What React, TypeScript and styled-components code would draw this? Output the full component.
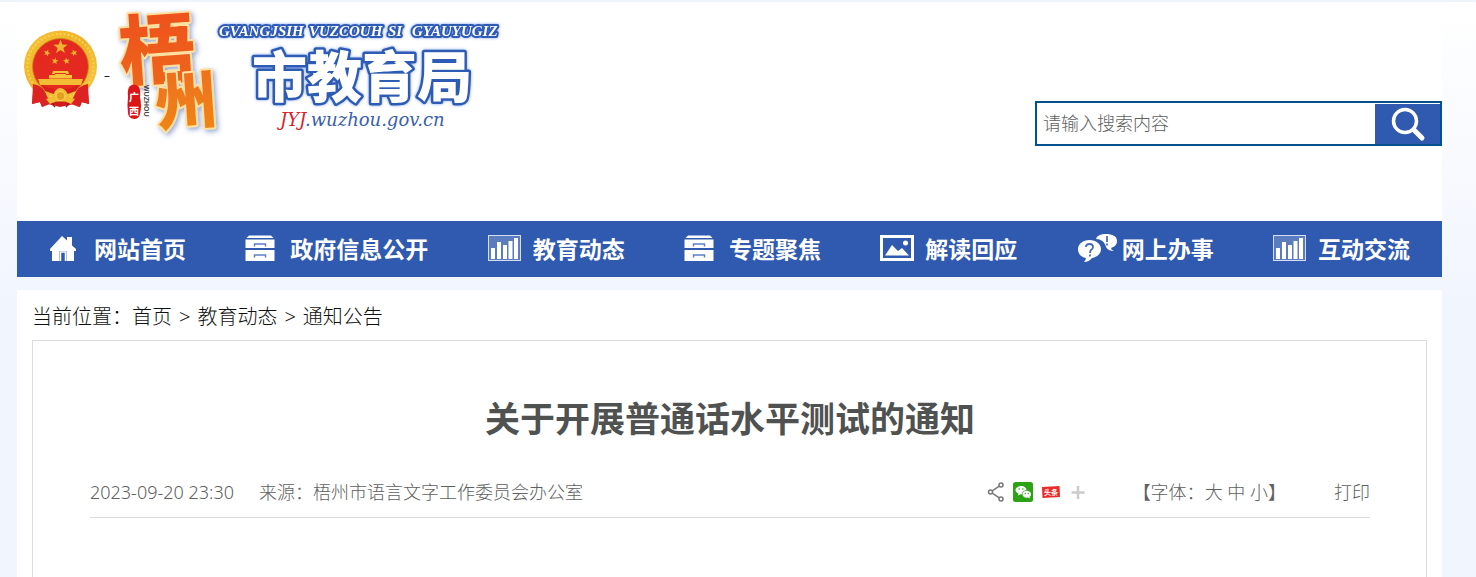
import React from "react";
import styled, { createGlobalStyle } from "styled-components";

const BLUE = "#2f5aaf";
const SANS = '"Noto Sans", "Noto Sans CJK SC", sans-serif';
const CJK = '"Noto Sans CJK SC", sans-serif';

const GlobalStyle = createGlobalStyle`
  * { box-sizing: border-box; }
  html { min-height: 100%; background: #f1f5fe; }
  body {
    margin: 0;
    font-family: ${SANS};
    color: #333;
    background: linear-gradient(#ffffff, #f1f5fe 300px);
    border-top: 2px solid #eef3fd;
  }
  a { color: inherit; text-decoration: none; }
`;

const Page = styled.div`
  margin: 0 34px 0 17px;
`;

const Header = styled.header`
  display: flex;
  justify-content: space-between;
  align-items: flex-start;
  height: 219px;
  padding-left: 7px;
  background: #fff;
`;

const LogoLink = styled.a`
  display: flex;
  align-items: flex-start;
`;

const LogoSvg = styled.svg`
  display: block;
  overflow: visible;
`;

const SearchForm = styled.form`
  display: flex;
  width: 407px;
  height: 45px;
  margin-top: 99px;
  border: 2px solid #02508f;
  background: #fff;
`;

const SearchInput = styled.input`
  flex: 1;
  min-width: 0;
  border: 0;
  padding: 0 6px 4px;
  outline: 0;
  background: transparent;
  font: 300 18px ${CJK};
  color: #333;
  &::placeholder { color: #606060; opacity: 1; }
`;

const SearchButton = styled.button`
  display: flex;
  align-items: center;
  justify-content: center;
  width: 65px;
  margin-top: 1px;
  padding: 2px 0 0;
  border: 0;
  background: ${BLUE};
  cursor: pointer;
`;

const Nav = styled.nav`
  display: flex;
  justify-content: space-between;
  align-items: center;
  height: 56px;
  padding: 0 32px 2px;
  background: ${BLUE};
`;

const NavLink = styled.a`
  display: flex;
  align-items: center;
  color: #fff;
  font: bold 23px/32px ${CJK};
  white-space: nowrap;
`;

const NavIcon = styled.span`
  display: flex;
  width: 45px;
  height: 32px;
  align-items: center;
`;

const Main = styled.main`
  margin-top: 13px;
  padding: 0 15px;
  background: #fff;
`;

const Breadcrumb = styled.nav`
  display: flex;
  height: 50px;
  font: 300 20px/54px ${SANS};
  color: #111;
`;

const Separator = styled.span`
  margin: 0 7px;
`;

const Article = styled.article`
  min-height: 300px;
  padding: 50px 56px 0 57px;
  border: 1px solid #dcdcdc;
`;

const Title = styled.h1`
  margin: 0;
  font: bold 35px/52px ${CJK};
  color: #505252;
  text-align: center;
`;

const Meta = styled.div`
  display: flex;
  align-items: center;
  height: 51px;
  margin-top: 24px;
  border-bottom: 1px solid #dcdcdc;
  font-weight: 300;
  font-size: 18px;
  line-height: 28px;
  color: #606060;
  white-space: nowrap;
`;

const Source = styled.span`
  margin-left: 25px;
`;

const Share = styled.div`
  display: flex;
  align-items: center;
  gap: 8px;
  margin-left: auto;
`;

const IconButton = styled.button`
  display: flex;
  padding: 0;
  border: 0;
  background: none;
  cursor: pointer;
`;

const PlainButton = styled.button`
  padding: 0;
  border: 0;
  background: none;
  color: inherit;
  font: inherit;
  cursor: pointer;
`;

const FontSizes = styled.div`
  margin: 0 48px 0 46px;
`;

const Star = ({ x, y, r, turn = 0 }: { x: number; y: number; r: number; turn?: number }) => {
  const pts = Array.from({ length: 10 }, (_, i) => {
    const a = ((i * 36 - 90 + turn) * Math.PI) / 180;
    const d = i % 2 ? r * 0.4 : r;
    return `${(x + d * Math.cos(a)).toFixed(2)},${(y + d * Math.sin(a)).toFixed(2)}`;
  });
  return <polygon points={pts.join(" ")} fill="#f0b530" />;
};

const Logo = () => (
  <LogoSvg width="490" height="140" viewBox="24 2 490 140" role="img" aria-label="梧州市教育局">
    <defs>
      <linearGradient id="orange" x1="0" y1="0" x2="0" y2="1">
        <stop offset="0" stopColor="#ee4a1a" />
        <stop offset="1" stopColor="#ee6a1c" />
      </linearGradient>
      <linearGradient id="amber" x1="0" y1="0" x2="0" y2="1">
        <stop offset="0" stopColor="#ee6a1c" />
        <stop offset="1" stopColor="#f08818" />
      </linearGradient>
      <linearGradient id="gold" x1="0" y1="0" x2="1" y2="1">
        <stop offset="0" stopColor="#f5c33a" />
        <stop offset=".5" stopColor="#efb32a" />
        <stop offset="1" stopColor="#f6cb45" />
      </linearGradient>
      <filter id="glow" x="-20%" y="-20%" width="150%" height="150%">
        <feDropShadow dx="2" dy="2" stdDeviation="2.5" floodColor="#3b5fae" floodOpacity=".55" />
      </filter>
      <filter id="halo" x="-10%" y="-20%" width="120%" height="140%">
        <feDropShadow dx="0" dy="0" stdDeviation="1.5" floodColor="#4a78e0" floodOpacity=".7" />
      </filter>
    </defs>

    <g>
      <path d="M34 84 L32 104 L40 102 L42 107 L48 104 L60 107 L74 104 L80 107 L82 102 L89 104 L87 84Z" fill="#cf1a1e" />
      <path d="M36 88 L39 101 M44 92 L43 106 M86 88 L82 101 M77 92 L78 106 M50 101 L55 107 M71 101 L66 107" stroke="#94100f" strokeWidth="1.2" />
      <ellipse cx="60.500" cy="66" rx="36.500" ry="35.500" fill="url(#gold)" />
      <ellipse cx="60.500" cy="66" rx="33" ry="32" fill="none" stroke="#f9d252" strokeWidth="2" strokeDasharray="2 2" />
      <circle cx="60.500" cy="66.500" r="28" fill="#e42a20" stroke="#c98a14" strokeWidth=".8" />
      <Star x={60.5} y={47} r={7.5} />
      <Star x={47} y={53} r={3.6} turn={20} />
      <Star x={74} y={53} r={3.6} turn={-20} />
      <Star x={55} y={61} r={3.6} turn={10} />
      <Star x={66.5} y={61} r={3.6} turn={-10} />
      <path d="M53 71 h15 l1 3 h-17z M49 75 h23 v3.500 h-23z M55 75 h11 v-2 h-11z" fill="#f6c53a" />
      <path d="M38 79 h45 l-2 6 h-41z" fill="#f3bd33" />
      <path d="M42 85 q18 10 37 0 l-3 6 q-15 7 -31 0z" fill="#d81f1e" />
      <path d="M33 84 q10 1 14 12 q3 8 9 11 l-6 -3 l-8 3 l-2 -5 l-8 2z M88 84 q-10 1 -14 12 q-3 8 -9 11 l6 -3 l8 3 l2 -5 l8 2z" fill="#dd2223" />
      <path d="M46 99 q7 -1 9 -8 q5 -6 11 0 q3 7 9 8 l-4 5 q-10 -6 -21 0z" fill="#f3bd33" />
      <circle cx="60.500" cy="96" r="4.500" fill="#e59f20" stroke="#fbdc66" />
    </g>
    <path d="M104.500 76.500 h5" stroke="#222" />

    <g filter="url(#glow)" fontFamily='"Noto Sans CJK SC", sans-serif' fontWeight="900" strokeLinejoin="round" paintOrder="stroke">
      <text x="119" y="77" fontSize="76" fill="url(#orange)" stroke="#ffe0a0" strokeWidth="4" transform="rotate(-4 158 45)">梧</text>
      <text x="155" y="124" fontSize="62" fill="url(#amber)" stroke="#ffe0a0" strokeWidth="4" transform="rotate(-4 186 100)">州</text>
    </g>

    <path d="M130 86 q4 -3 8 0 q3 3 2 11 q2 9 0 17 q-1 5 -6 5 q-6 -1 -6 -6 q-1 -9 0 -16 q-1 -8 2 -11z" fill="#dc1519" />
    <g fill="#fff" fontFamily='"Noto Sans CJK SC", sans-serif' fontWeight="bold" fontSize="10">
      <text x="129" y="101">广</text>
      <text x="129" y="115">西</text>
    </g>
    <text transform="translate(144 85) rotate(90)" fontFamily='"Liberation Sans", sans-serif' fontWeight="bold" fontSize="7" fill="#444">WUZHOU</text>

    <g
      filter="url(#halo)"
      fontFamily='"Liberation Serif", serif'
      fontWeight="bold"
      fontStyle="italic"
      fontSize="15"
      fill="#fff"
      stroke="#2f5cb4"
      strokeWidth="4"
      strokeLinejoin="round"
      paintOrder="stroke"
    >
      <text x="219" y="36">GVANGJSIH</text>
      <text x="309" y="36">VUZCOUH</text>
      <text x="388" y="36">SI</text>
      <text x="412" y="36">GYAUYUGIZ</text>
    </g>
    <text
      x="252"
      y="97"
      filter="url(#halo)"
      fontFamily='"Noto Sans CJK SC", sans-serif'
      fontWeight="900"
      fontSize="55"
      fill="#fff"
      stroke="#2f5cb4"
      strokeWidth="5"
      strokeLinejoin="round"
      paintOrder="stroke"
    >
      市教育局
    </text>
    <text x="280" y="126" fontFamily='"DejaVu Serif", serif' fontStyle="italic" fontSize="18" fill="#3a60ac">
      <tspan fill="#d8232a">JYJ</tspan>.wuzhou.gov.cn
    </text>
  </LogoSvg>
);

const HomeIcon = () => (
  <svg width="28" height="28" viewBox="0 0 28 28" aria-hidden="true">
    <path d="M1 15 L13 2 L18 6.500 V3 H23 V11.500 L27 15 V17 H25 V27 H17.500 V17 H10.500 V27 H3 V17 H1Z" fill="#fff" />
    <path d="M11.500 27 V18 H16.500 V27" fill="none" stroke="#fff" strokeWidth="1.500" />
  </svg>
);

const DrawerIcon = () => (
  <svg width="30" height="28" viewBox="0 0 30 28" aria-hidden="true">
    <path d="M4 1.500 H26 L28.500 4 H1.500Z" fill="#fff" />
    <path d="M0.500 5.500 H29.500 V14 H0.500Z M0.500 16 H29.500 V27 H0.500Z" fill="#fff" />
    <path d="M9.500 12.500 V10 H20.500 V12.500 M9.500 23.500 V21 H20.500 V23.500" fill="none" stroke="#5f7fc2" strokeWidth="1.500" />
  </svg>
);

const ChartIcon = () => (
  <svg width="33" height="28" viewBox="0 0 33 28" aria-hidden="true">
    <rect x=".5" y="1.500" width="32" height="25" fill="#5c7cc0" stroke="#d6dff0" />
    <path d="M3 14 h4 v11 h-4z M9 8 h4 v17 h-4z M15 11 h4 v14 h-4z M20.500 7 h4 v18 h-4z M26 4 h4 v21 h-4z" fill="#fff" />
  </svg>
);

const PictureIcon = () => (
  <svg width="34" height="28" viewBox="0 0 34 28" aria-hidden="true">
    <rect x="1.500" y="2.500" width="31" height="23" fill="none" stroke="#fff" strokeWidth="3" />
    <path d="M5 21.500 L12 11 L18 17 L22 14 L29 21.500Z" fill="#fff" />
    <circle cx="25.500" cy="9" r="2.500" fill="#fff" />
  </svg>
);

const ChatIcon = () => (
  <svg width="41" height="32" viewBox="0 0 41 32" aria-hidden="true">
    <path d="M19 7 C20 3 25 2 29 2 C35 2 40 4 40 9 C40 13 37 15 34 16 Q34 18 37 19 Q31 19 29 15 C28 10 24 7 19 7Z" fill="#fff" />
    <path d="M12.500 8 C19 8 24 12 24 17 C24 22 20 25 15 26 Q12 30 7 30 Q9 28 9 26 C4 25 1 22 1 17 C1 12 6 8 12.500 8Z" fill="#fff" />
    <path d="M9 15 q0 -3 3.500 -3 q3.500 0 3.500 3 q0 2 -2 3 q-1 1 -1 3 M13 22.500 v2" fill="none" stroke="#4a6cb6" strokeWidth="1.800" />
    <path d="M30 4 v6 M30 11.500 v2" stroke="#4a6cb6" strokeWidth="1.800" />
  </svg>
);

const items = [
  { label: "网站首页", Icon: HomeIcon },
  { label: "政府信息公开", Icon: DrawerIcon },
  { label: "教育动态", Icon: ChartIcon },
  { label: "专题聚焦", Icon: DrawerIcon },
  { label: "解读回应", Icon: PictureIcon },
  { label: "网上办事", Icon: ChatIcon },
  { label: "互动交流", Icon: ChartIcon },
];

export default function App() {
  return (
    <>
      <GlobalStyle />
      <Page>
        <Header>
          <LogoLink href="#">
            <Logo />
          </LogoLink>
          <SearchForm role="search" onSubmit={(e) => e.preventDefault()}>
            <SearchInput type="text" placeholder="请输入搜索内容" aria-label="请输入搜索内容" />
            <SearchButton type="submit" aria-label="搜索">
              <svg width="36" height="36" viewBox="0 0 36 36" fill="none" stroke="#fff" aria-hidden="true">
                <circle cx="15" cy="14" r="11.500" strokeWidth="3.500" />
                <path d="M24 23 L32 31" strokeWidth="5" strokeLinecap="round" />
              </svg>
            </SearchButton>
          </SearchForm>
        </Header>

        <Nav>
          {items.map(({ label, Icon }) => (
            <NavLink href="#" key={label}>
              <NavIcon>
                <Icon />
              </NavIcon>
              {label}
            </NavLink>
          ))}
        </Nav>

        <Main>
          <Breadcrumb>
            <span>当前位置：</span>
            <a href="#">首页</a>
            <Separator>&gt;</Separator>
            <a href="#">教育动态</a>
            <Separator>&gt;</Separator>
            <a href="#">通知公告</a>
          </Breadcrumb>

          <Article>
            <Title>关于开展普通话水平测试的通知</Title>
            <Meta>
              <time dateTime="2023-09-20T23:30">2023-09-20 23:30</time>
              <Source>来源：梧州市语言文字工作委员会办公室</Source>
              <Share>
                <IconButton aria-label="分享">
                  <svg width="18" height="20" viewBox="0 0 18 20" fill="none" stroke="#777" strokeWidth="1.500">
                    <circle cx="3.500" cy="10" r="2" />
                    <circle cx="14" cy="3" r="2" />
                    <circle cx="14" cy="17" r="2" />
                    <path d="M5.200 8.900 L12.300 4.200 M5.200 11.100 L12.300 15.800" />
                  </svg>
                </IconButton>
                <IconButton aria-label="微信">
                  <svg width="20" height="20" viewBox="0 0 20 20">
                    <rect width="20" height="20" rx="2.500" fill="#2ba314" />
                    <path d="M8 4 c3.300 0 5.500 2 5.500 4.200 q-4.500 .3 -4.500 4 l-1.500 .1 l-2.500 1.200 l.3 -2 C3.500 10.500 2.500 9.500 2.500 8 C2.500 5.800 5 4 8 4z" fill="#fff" />
                    <path d="M13.700 8.800 c2.500 0 4.300 1.500 4.300 3.500 c0 1.200 -.6 2 -1.500 2.700 l.3 1.500 l-1.800 -.9 c-3.200 .6 -5.500 -1.100 -5.500 -3.300 c0 -2 1.800 -3.500 4.200 -3.500z" fill="#fff" />
                    <g fill="#2ba314">
                      <circle cx="6.200" cy="7" r=".8" />
                      <circle cx="9.800" cy="7" r=".8" />
                      <circle cx="12.300" cy="11.500" r=".7" />
                      <circle cx="15.200" cy="11.500" r=".7" />
                    </g>
                  </svg>
                </IconButton>
                <IconButton aria-label="头条">
                  <svg width="20" height="20" viewBox="0 0 20 20">
                    <path d="M1 5 L18.500 4 L19 15 L1.500 16Z" fill="#ec2a2a" />
                    <text x="3" y="13" fontFamily='"Noto Sans CJK SC", sans-serif' fontWeight="bold" fontSize="7" fill="#fff">头条</text>
                  </svg>
                </IconButton>
                <IconButton aria-label="更多">
                  <svg width="18" height="20" viewBox="0 0 18 20">
                    <path d="M9 4 V17 M2.500 10.500 H15.500" stroke="#ccc" strokeWidth="2.500" />
                  </svg>
                </IconButton>
              </Share>
              <FontSizes>
                【字体：<PlainButton>大</PlainButton> <PlainButton>中</PlainButton> <PlainButton>小</PlainButton>】
              </FontSizes>
              <PlainButton>打印</PlainButton>
            </Meta>
          </Article>
        </Main>
      </Page>
    </>
  );
}
